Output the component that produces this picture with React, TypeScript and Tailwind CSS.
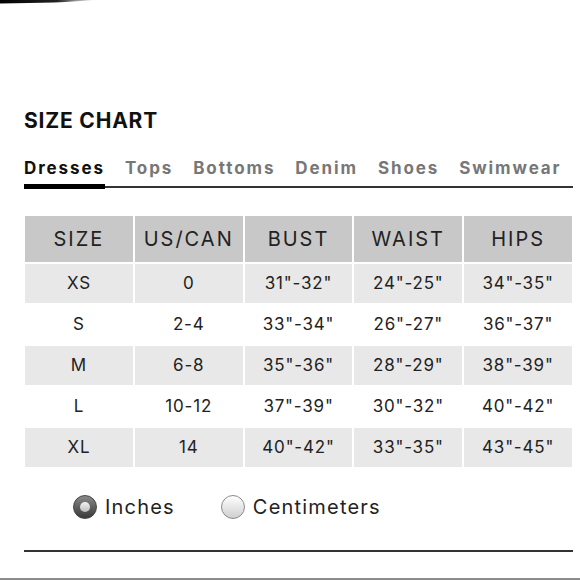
import React from "react";

const tabs = ["Dresses", "Tops", "Bottoms", "Denim", "Shoes", "Swimwear"];
const headers = ["SIZE", "US/CAN", "BUST", "WAIST", "HIPS"];
const rows = [
  ["XS", "0", '31"-32"', '24"-25"', '34"-35"'],
  ["S", "2-4", '33"-34"', '26"-27"', '36"-37"'],
  ["M", "6-8", '35"-36"', '28"-29"', '38"-39"'],
  ["L", "10-12", '37"-39"', '30"-32"', '40"-42"'],
  ["XL", "14", '40"-42"', '33"-35"', '43"-45"'],
];

const Radio: React.FC<{ checked?: boolean; label: string }> = ({ checked, label }) => (
  <label className="flex items-center gap-[8px] h-[28px]">
    {checked ? (
      <span className="w-[24px] h-[24px] rounded-full bg-gradient-to-b from-[#8a8a8a] to-[#3a3a3a] border border-[#444] flex items-center justify-center">
        <span className="w-[10px] h-[10px] rounded-full bg-gradient-to-b from-[#f2f2f2] to-[#bdbdbd]" />
      </span>
    ) : (
      <span className="w-[24px] h-[24px] rounded-full bg-gradient-to-b from-[#ffffff] to-[#cfcfcf] border border-[#8a8a8a]" />
    )}
    <span className="text-[20px] leading-[28px] text-[#222] tracking-[1.2px]">{label}</span>
  </label>
);

export default function App() {
  return (
    <div
      className="w-[580px] h-[580px] bg-white overflow-hidden flex flex-col border-b-2 border-[#8c8c8c]"
      style={{ fontFamily: "Inter, 'Noto Sans', sans-serif" }}
    >
      <svg width="280" height="6" viewBox="0 0 280 6" className="shrink-0">
        <defs>
          <linearGradient id="blob" x1="0" x2="1" y1="0" y2="0">
            <stop offset="0" stopColor="#000" />
            <stop offset="0.6" stopColor="#222" />
            <stop offset="1" stopColor="#fff" />
          </linearGradient>
        </defs>
        <path d="M0 0 H95 Q60 3 0 3.5 Z" fill="url(#blob)" />
      </svg>

      <div className="px-6 pt-[104px]">
        <h1 className="text-[21px] font-bold text-[#111] tracking-[0.8px] leading-none">SIZE CHART</h1>

        <div className="mt-[27px] flex gap-[20px] border-b-2 border-[#333] w-[549px]">
          {tabs.map((t, i) => (
            <div
              key={t}
              className={
                i === 0
                  ? "text-[17px] leading-[20px] font-bold tracking-[1.9px] text-[#111] pb-[6px] border-b-[5px] border-black -mb-[3px]"
                  : "text-[17px] leading-[20px] font-bold tracking-[1.9px] text-[#777] pb-[6px]"
              }
            >
              {t}
            </div>
          ))}
        </div>

        <div className="mt-[28px] w-[548px] grid grid-cols-5 gap-[2px] text-[#222] pl-px">
          {headers.map((h) => (
            <div key={h} className="h-[46px] bg-[#c8c8c8] flex items-center justify-center text-[20px] tracking-[2px]">
              {h}
            </div>
          ))}
          {rows.map((r, ri) =>
            r.map((c, ci) => (
              <div
                key={ri + "-" + ci}
                className={
                  "h-[39px] flex items-center justify-center text-[17px] tracking-[0.8px] " +
                  (ri % 2 === 0 ? "bg-[#e8e8e8]" : "bg-white")
                }
              >
                {c}
              </div>
            ))
          )}
        </div>

        <div className="mt-[26px] flex gap-[46px] pl-[49px]">
          <Radio checked label="Inches" />
          <Radio label="Centimeters" />
        </div>

        <div className="mt-[29px] w-[549px] h-[2px] bg-[#333]" />
      </div>
    </div>
  );
}
